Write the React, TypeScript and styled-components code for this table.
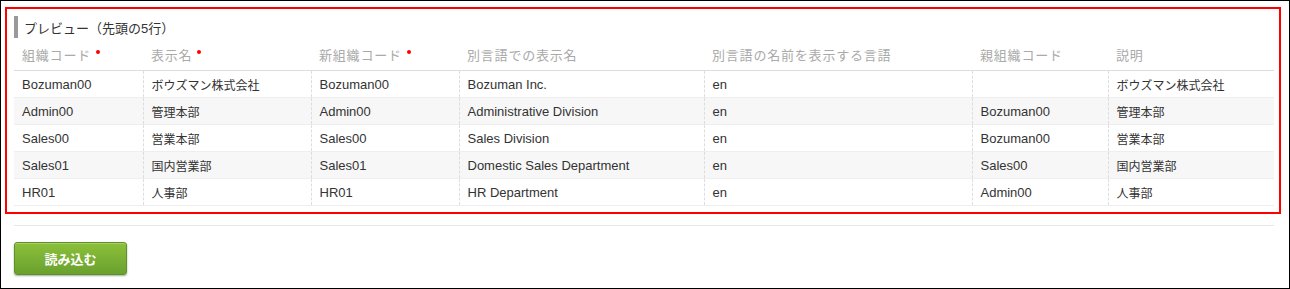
import React from 'react'
import styled, { createGlobalStyle } from 'styled-components'

const GlobalStyle = createGlobalStyle`
  html, body {
    margin: 0;
    padding: 0;
    background: #fff;
  }
  body {
    font-family: 'Liberation Sans', 'Noto Sans CJK JP', sans-serif;
    color: #333;
  }
`

const Frame = styled.div`
  width: 1290px;
  height: 289px;
  box-sizing: border-box;
  border: 1px solid #000;
  overflow: hidden;
`

const Highlight = styled.section`
  margin: 6px 8px 0 4px;
  border: 2px solid #f00;
  padding: 7px 5px 6px 7px;
`

const Title = styled.h3`
  margin: 0;
  height: 22px;
  display: flex;
  align-items: center;
  border-left: 4px solid #999;
  padding-left: 6px;
  font-size: 13px;
  font-weight: normal;
  color: #333;
`

const Table = styled.table`
  width: 1260px;
  border-collapse: collapse;
  table-layout: fixed;
  font-size: 13px;
`

const Th = styled.th`
  height: 32px;
  padding: 0 8px;
  text-align: left;
  font-weight: normal;
  color: #aaa;
  letter-spacing: 0.8px;
  white-space: nowrap;
  border-bottom: 1px solid #ddd;
`

const Required = styled.span`
  display: inline-block;
  width: 4px;
  height: 4px;
  border-radius: 50%;
  background: #f00;
  margin-left: 5px;
  vertical-align: 6px;
`

const Tr = styled.tr<{ $alt: boolean }>`
  background: ${p => (p.$alt ? '#f7f7f7' : '#fff')};
`

const Td = styled.td<{ $cjk: boolean }>`
  height: 26px;
  padding: 0 8px;
  color: #333;
  font-size: ${p => (p.$cjk ? '12px' : '13px')};
  white-space: nowrap;
  border-bottom: 1px solid #eee;
  & + & {
    border-left: 1px dashed #ddd;
  }
`

const Footer = styled.div`
  margin: 11px 15px 0 13px;
  border-top: 1px solid #e8e8e8;
  padding-top: 16px;
`

const LoadButton = styled.button`
  width: 113px;
  height: 33px;
  border: 1px solid #5e9226;
  border-radius: 3px;
  background: linear-gradient(#8cc03a, #69a12e);
  box-shadow: 0 1px 2px rgba(0, 0, 0, 0.35), inset 0 1px 0 rgba(255, 255, 255, 0.25);
  color: #fff;
  font-family: 'Liberation Sans', 'Noto Sans CJK JP', sans-serif;
  font-size: 13px;
  font-weight: bold;
  cursor: pointer;
`

const columns: { label: string; width: number; required?: boolean }[] = [
  { label: '組織コード', width: 129, required: true },
  { label: '表示名', width: 168, required: true },
  { label: '新組織コード', width: 148, required: true },
  { label: '別言語での表示名', width: 245 },
  { label: '別言語の名前を表示する言語', width: 268 },
  { label: '親組織コード', width: 136 },
  { label: '説明', width: 166 },
]

const rows: string[][] = [
  ['Bozuman00', 'ボウズマン株式会社', 'Bozuman00', 'Bozuman Inc.', 'en', '', 'ボウズマン株式会社'],
  ['Admin00', '管理本部', 'Admin00', 'Administrative Division', 'en', 'Bozuman00', '管理本部'],
  ['Sales00', '営業本部', 'Sales00', 'Sales Division', 'en', 'Bozuman00', '営業本部'],
  ['Sales01', '国内営業部', 'Sales01', 'Domestic Sales Department', 'en', 'Sales00', '国内営業部'],
  ['HR01', '人事部', 'HR01', 'HR Department', 'en', 'Admin00', '人事部'],
]

const isCjk = (s: string) => /[\u3000-\u9fff]/.test(s)

const App: React.FC = () => {
  return (
    <Frame>
      <GlobalStyle />
      <Highlight>
        <Title>プレビュー（先頭の5行）</Title>
        <Table>
          <colgroup>
            {columns.map(c => (
              <col key={c.label} style={{ width: c.width }} />
            ))}
          </colgroup>
          <thead>
            <tr>
              {columns.map(c => (
                <Th key={c.label}>
                  {c.label}
                  {c.required && <Required />}
                </Th>
              ))}
            </tr>
          </thead>
          <tbody>
            {rows.map((row, i) => (
              <Tr key={row[0]} $alt={i % 2 === 1}>
                {row.map((cell, j) => (
                  <Td key={j} $cjk={isCjk(cell)}>{cell}</Td>
                ))}
              </Tr>
            ))}
          </tbody>
        </Table>
      </Highlight>
      <Footer>
        <LoadButton>読み込む</LoadButton>
      </Footer>
    </Frame>
  )
}

export default App
